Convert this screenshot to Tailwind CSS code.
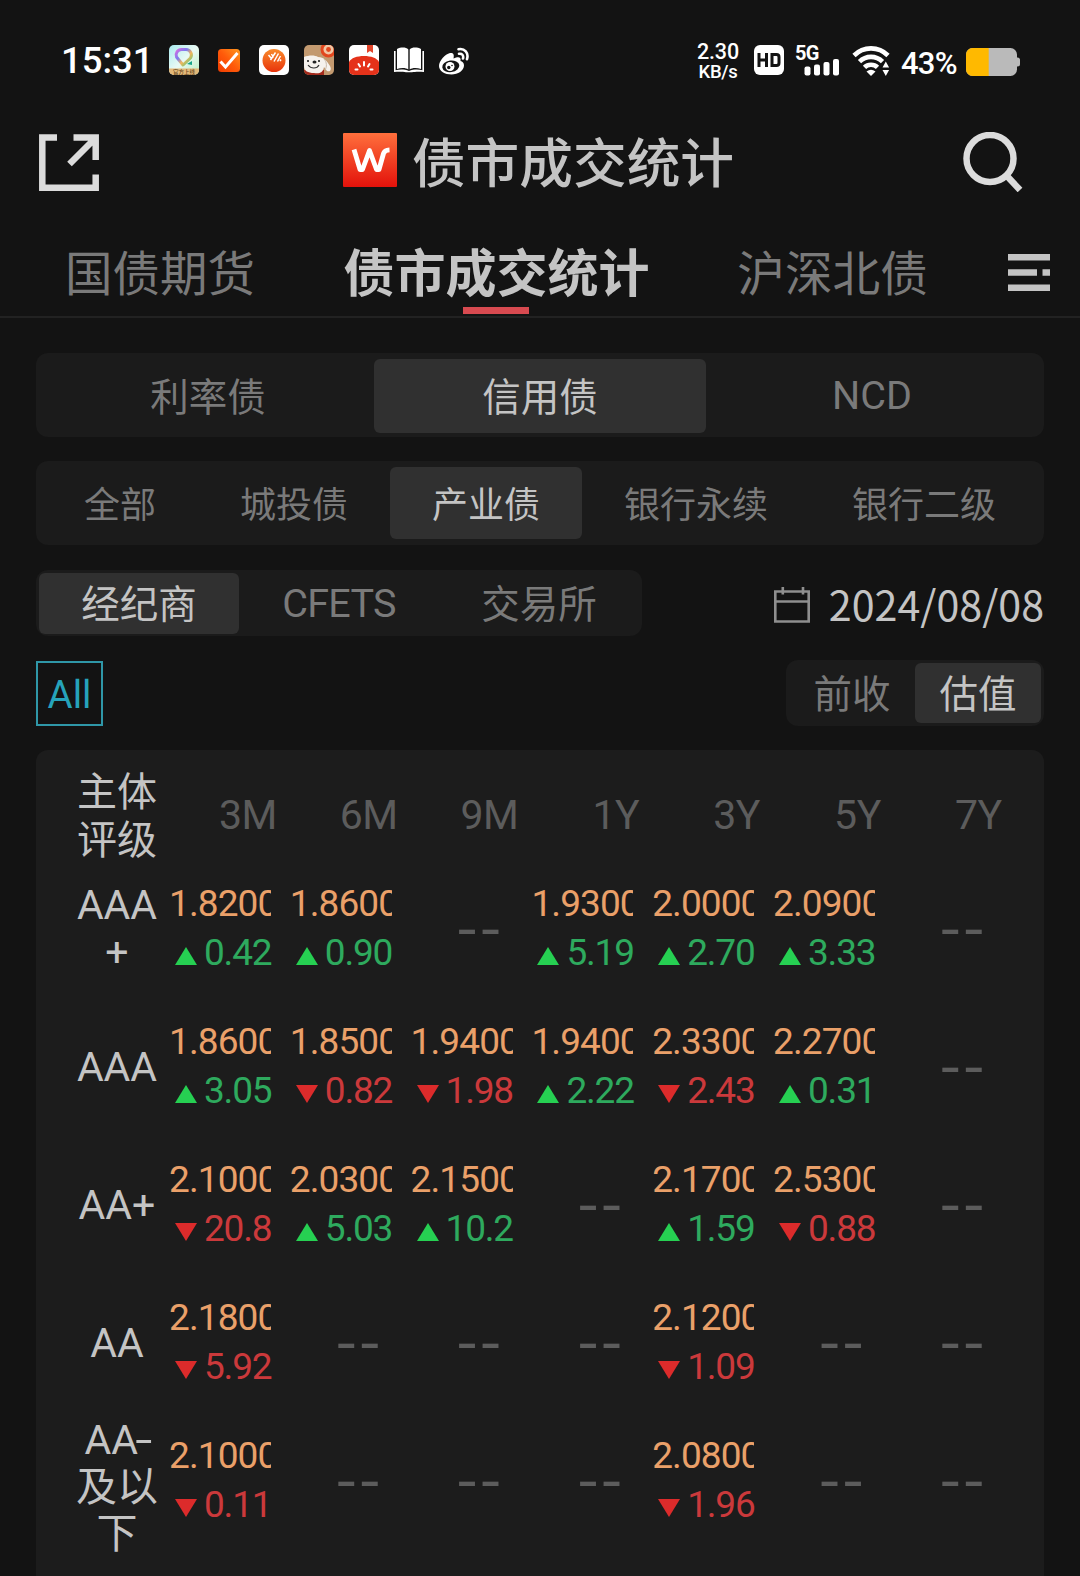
<!DOCTYPE html>
<html lang="zh-CN">
<head>
    <meta charset="UTF-8">
    <meta name="viewport" content="width=device-width, initial-scale=1.0">
    <title>债市成交统计</title>
    <script src="https://cdn.jsdelivr.net/npm/@tailwindcss/browser@4"></script>
</head>
<body class="w-[1080px] h-[1576px] overflow-hidden bg-[#131313] text-[#c4c4c4] font-['Noto_Sans_CJK_SC',sans-serif]">
    <!-- Status bar -->
    <div class="h-[120px] pl-[61px] pr-[60px] flex justify-between text-white font-['Roboto',sans-serif] font-medium">
        <div class="flex items-center h-[120px]">
            <span class="w-[108px] mt-[2px] text-[36.5px] leading-none">15:31</span>
            <div class="flex gap-[15px]">
                <svg class="w-[30px] h-[30px]" viewBox="0 0 30 30">
                    <defs>
                        <linearGradient id="mapBg" x1="0" y1="0" x2="1" y2="1"><stop offset="0" stop-color="#a9eaf0"/><stop offset=".5" stop-color="#e9faf4"/><stop offset="1" stop-color="#b9eec0"/></linearGradient>
                        <linearGradient id="mapPin" x1="0" y1="0" x2="1" y2="1"><stop offset="0" stop-color="#d86be0"/><stop offset=".35" stop-color="#7a7cf0"/><stop offset=".6" stop-color="#f2b75c"/><stop offset="1" stop-color="#42cf7c"/></linearGradient>
                    </defs>
                    <rect width="30" height="30" rx="5" fill="url(#mapBg)"/>
                    <path d="M14 20 7.500 12a5.500 5.500 0 0 1 5-7.500h4.500a5.500 5.500 0 0 1 4.500 8.500z" fill="none" stroke="url(#mapPin)" stroke-width="3" stroke-linejoin="round"/>
                    <path d="M18 19l5-3v4z" fill="#17a589"/>
                    <path d="M0 23.500h30V25a5 5 0 0 1-5 5H5a5 5 0 0 1-5-5z" fill="#e3b878"/>
                    <text x="15" y="29" font-size="5.500" text-anchor="middle" fill="#6b4a22" font-family="Noto Sans CJK SC">官方上线</text>
                </svg>
                <svg class="w-[30px] h-[30px]" viewBox="0 0 30 30">
                    <defs><linearGradient id="todo" x1="1" y1="0" x2="0" y2="1"><stop offset="0" stop-color="#ff9a1f"/><stop offset=".5" stop-color="#ff5a0a"/><stop offset="1" stop-color="#f03c00"/></linearGradient></defs>
                    <rect x="4" y="4" width="22" height="23" rx="3.500" fill="url(#todo)"/>
                    <path d="M6.500 16.500l5 5.500L23.500 8" fill="none" stroke="#fff" stroke-width="3"/>
                </svg>
                <svg class="w-[30px] h-[30px]" viewBox="0 0 30 30">
                    <defs><linearGradient id="disc" x1="0" y1="0" x2="0" y2="1"><stop offset="0" stop-color="#f98a2b"/><stop offset="1" stop-color="#e8340c"/></linearGradient></defs>
                    <rect width="30" height="30" rx="5" fill="#fff"/>
                    <circle cx="15" cy="15.500" r="11.500" fill="url(#disc)"/>
                    <path d="M9.500 10l2.500 3M12.500 9l2 3.500M16.500 7.500l-5 7.500M19.500 8.500l-4.500 8M21.500 11l-3 5.500M22 14.500l-1 1.500" stroke="#fff" stroke-width="1.500" fill="none"/>
                </svg>
                <svg class="w-[30px] h-[30px]" viewBox="0 0 30 30">
                    <defs><clipPath id="jd"><rect width="30" height="30" rx="5"/></clipPath></defs>
                    <g clip-path="url(#jd)">
                        <rect width="30" height="30" fill="#c39a70"/>
                        <path d="M0 30v-5l10-1 10 1v5z" fill="#a32a1c"/>
                        <path d="M0 12c5-2 11-2 14 0 6 0 9 4 12 9 2 4 0 6-3 5l-3-4c-1 6-5 7-10 6-6 0-10-2-10-7z" fill="#f6f2ee"/>
                        <path d="M20 14c3 3 3 8 1 11" fill="none" stroke="#c9b9aa" stroke-width="1"/>
                        <ellipse cx="10.500" cy="17" rx="2" ry="1.500" fill="#222"/>
                        <circle cx="4" cy="16" r="1.100" fill="#222"/><circle cx="15" cy="16" r="1.100" fill="#222"/>
                        <path d="M4 20c3 4 9 4 11 0" fill="none" stroke="#333" stroke-width="1.100"/>
                        <circle cx="24.500" cy="4.500" r="8" fill="#e2471e"/><circle cx="24.500" cy="4.500" r="5" fill="#f1c6a4"/><circle cx="24.500" cy="4.500" r="2.400" fill="#e2471e"/>
                    </g>
                </svg>
                <svg class="w-[30px] h-[30px]" viewBox="0 0 30 30">
                    <defs><clipPath id="tm"><rect width="30" height="30" rx="5"/></clipPath></defs>
                    <g clip-path="url(#tm)">
                        <rect width="30" height="30" fill="#fff"/>
                        <path d="M18 0h6v8l-3-2-3 2z" fill="#e2452a"/>
                        <path d="M0 17c2-4 8-6 15-6s13 2 15 6v13H0z" fill="#e5321a"/>
                        <path d="M15 17v3.500M9.500 19l1.500 2.500M20.500 19L19 21.500M6.500 24.500h2M23.500 24.500h-2" stroke="#fff" stroke-width="2" stroke-linecap="round"/>
                    </g>
                </svg>
                <svg class="w-[30px] h-[30px]" viewBox="0 0 30 30" fill="#fff">
                    <path d="M3 4c4-2 9-2 11.300.500v20C12 22.500 7 22.500 3 24zM27 4c-4-2-9-2-11.300.500v20C18 22.500 23 22.500 27 24z"/>
                    <path d="M0 6h1.600v19.300c4-1 9-1 13.400.7 4.400-1.700 9.400-1.700 13.400-.7V6H30v21c-4-.5-9-.5-12 .3h-6C9 26.500 4 26.500 0 27z"/>
                </svg>
                <svg class="w-[30px] h-[30px]" viewBox="0 0 30 30">
                    <path d="M11 8c-5 1-11 8-11 13 0 5 6 8.500 12.500 8.500S25 25.500 25 20.500c0-2.500-1.500-4-3.500-4.500.8-3.500-1.500-5-7-2.500C15.500 9 14 7.500 11 8z" fill="#fff"/>
                    <ellipse cx="11.800" cy="21.300" rx="8.600" ry="5.800" transform="rotate(-8 11.800 21.300)" fill="#131313"/>
                    <circle cx="11" cy="21.500" r="4.500" fill="#fff"/>
                    <circle cx="9.800" cy="22.500" r="1.700" fill="#131313"/><circle cx="13" cy="20.500" r=".8" fill="#131313"/>
                    <path d="M19.500 4.200c6-1.200 10.500 3.500 8.500 10M20 8.800c3-.5 4.800 1.500 4 4.700" fill="none" stroke="#fff" stroke-width="2.600" stroke-linecap="round"/>
                </svg>
            </div>
        </div>
        <div class="flex items-center h-[120px]">
            <div class="w-[44px] mr-[14px] flex flex-col items-center gap-px leading-none">
                <span class="text-[21.500px] leading-[20px] mt-[2px] tracking-[-0.200px]">2.30</span>
                <span class="text-[18.500px] leading-[18px] tracking-[-0.300px]">KB/s</span>
            </div>
            <svg class="w-[30px] h-[30px] mr-[11px]" viewBox="0 0 30 30">
                <rect width="30" height="30" rx="6" fill="#fff"/>
                <path d="M5 8v14M12.500 8v14M5 15h7.500M18 9.500h4.500q2.500 0 2.500 2.500v6q0 2.500-2.500 2.500H18z" fill="none" stroke="#131313" stroke-width="3"/>
            </svg>
            <div class="relative w-[46px] h-[30px] mr-[11px]">
                <span class="absolute left-0 top-0 text-[20px] font-bold leading-[17px] tracking-[-0.800px]">5G</span>
                <svg class="absolute left-0 top-0 w-[46px] h-[31px]" viewBox="0 0 46 31" fill="#fff">
                    <rect x="9.500" y="21.500" width="6" height="9" rx="2"/><rect x="19" y="19.500" width="6" height="11" rx="2"/><rect x="28.500" y="17" width="6" height="13.500" rx="2"/><rect x="38" y="14" width="6" height="16.500" rx="2"/>
                </svg>
            </div>
            <svg class="w-[38px] h-[32px] mt-[2px] mr-[11px]" viewBox="0 0 38 32">
                <g fill="none" stroke="#fff" stroke-width="4.600">
                    <path d="M2 10.500c9.500-9.500 24.500-9.500 34 0"/>
                    <path d="M7.500 16.700c6.500-6.500 16.500-6.500 23 0"/>
                    <path d="M12.500 22.400c3.500-3.500 9.500-3.500 13 0"/>
                </g>
                <path d="M14.500 26.500q4.500-3.500 9 0L19 31z" fill="#fff"/>
                <path d="M29 23.500l4.800-9 4.800 9v2l-4.800 7-4.800-7z" fill="#131313"/>
                <path d="M30.500 22.500l3.300-6 3.300 6zM30.500 25l3.300 6 3.300-6z" fill="#fff"/>
            </svg>
            <span class="w-[65px] mt-[6px] text-[31px] leading-none tracking-[-0.800px]">43%</span>
            <svg class="w-[54px] h-[28px] mt-[4px]" viewBox="0 0 54 28">
                <rect x="46" y="9.500" width="8" height="9" rx="2.500" fill="#bababa"/>
                <rect width="51" height="28" rx="6.500" fill="#bababa"/>
                <path d="M6.500 0H22.700V28H6.500A6.500 6.500 0 0 1 0 21.500V6.500A6.500 6.500 0 0 1 6.500 0z" fill="#ffb900"/>
            </svg>
        </div>
    </div>

    <!-- Title bar -->
    <div class="h-[84px] pl-[39px] pr-[57px] flex items-center justify-between">
        <svg class="w-[60px] h-[57px]" viewBox="0 0 60 57" fill="none" stroke="#dcdcdc" stroke-width="6.500">
            <path d="M18 3.500H3.300V53.700H56.700V40.500"/>
            <path d="M34.500 3.500H56.700V26M56 4.500L30.500 30"/>
        </svg>
        <div class="flex items-center gap-[15px] ml-[15px] -mt-[4px]">
            <svg class="w-[54px] h-[54px]" viewBox="0 0 54 54">
                <defs><linearGradient id="wind" x1="0" y1="0" x2="0" y2="1"><stop offset="0" stop-color="#ff6f3c"/><stop offset="1" stop-color="#e3120b"/></linearGradient></defs>
                <rect width="54" height="54" rx="1" fill="url(#wind)"/>
                <path d="M11 16.500L17 36.500H19.500L26.500 17.500 33.500 36.500H36L40.500 20.500Q41.500 17 46.500 16.800" fill="none" stroke="#fff" stroke-width="4.800" stroke-linejoin="round"/>
            </svg>
            <h1 class="text-[53.700px] leading-[60px] font-medium">债市成交统计</h1>
        </div>
        <svg class="w-[60px] h-[60px]" viewBox="0 0 60 60" fill="none" stroke="#dcdcdc" stroke-width="6.500">
            <circle cx="27" cy="26.500" r="23.500"/>
            <path d="M43.500 43.500L57 58"/>
        </svg>
    </div>

    <!-- Tabs -->
    <div class="relative h-[114px] pl-[65px] pr-[30px] flex items-center justify-between border-b-2 border-[#222222] text-[47.500px] text-[#7a7a7a]">
        <span class="w-[192px] mt-[21px]">国债期货</span>
        <span class="mt-[20px] mr-[1px] text-[51px] text-[#c4c4c4] font-bold">债市成交统计</span>
        <div class="mt-[21px] flex items-center gap-[80px]">
            <span class="text-[47.700px]">沪深北债</span>
            <svg class="w-[42px] h-[37px] mt-[4px]" viewBox="0 0 42 37" fill="#c4c4c4">
                <path d="M0 0h42v6.500H0zM0 15.300h29v6.500H0zM34.500 15.300H42v6.500h-7.500zM0 30.500h42V37H0z"/>
            </svg>
        </div>
        <div class="absolute left-[463px] bottom-[2px] w-[66px] h-[7px] bg-[#d84a50]"></div>
    </div>

    <div class="px-9 pt-[35px] flex flex-col">
        <!-- Bond type -->
        <div class="h-[84px] p-[6px] grid grid-cols-3 rounded-xl bg-[#1b1b1b] text-[38.500px] text-[#7a7a7a] text-center leading-[70px]">
            <span>利率债</span>
            <span class="rounded-md bg-[#303030] text-[#c4c4c4]">信用债</span>
            <span class="font-['Roboto',sans-serif] text-[39.500px] leading-[74px]">NCD</span>
        </div>

        <!-- Sub type -->
        <div class="mt-[24px] h-[84px] p-[6px] flex rounded-xl bg-[#1b1b1b] text-[36px] text-[#7a7a7a] leading-[70px]">
            <span class="px-[42px]">全部</span>
            <span class="px-[42px]">城投债</span>
            <span class="px-[42px] rounded-md bg-[#303030] text-[#c4c4c4]">产业债</span>
            <span class="px-[42px]">银行永续</span>
            <span class="px-[42px]">银行二级</span>
        </div>

        <!-- Source and date -->
        <div class="mt-[25px] h-[66px] flex items-center justify-between">
            <div class="w-[606px] h-[66px] p-[3px] grid grid-cols-3 rounded-xl bg-[#1b1b1b] text-[38.500px] text-[#7a7a7a] text-center leading-[57px]">
                <span class="rounded-md bg-[#303030] text-[#c4c4c4]">经纪商</span>
                <span class="font-['Roboto',sans-serif] text-[39.500px] leading-[61px] tracking-[-0.700px]">CFETS</span>
                <span>交易所</span>
            </div>
            <div class="flex items-center gap-[19px]">
                <svg class="w-[36px] h-[36px] mt-[3px]" viewBox="0 0 36 36" fill="none" stroke="#8f8f8f">
                    <path d="M1.300 4.500H34.700V34.500H1.300z" stroke-width="2.600"/>
                    <path d="M1 14.500H35M8.800 0v7.500M29 0v7.500" stroke-width="2.600"/>
                </svg>
                <span class="text-[41.200px] leading-[60px]">2024/08/08</span>
            </div>
        </div>

        <!-- Filters -->
        <div class="mt-[24px] h-[66px] flex items-center justify-between text-[38.500px]">
            <div class="w-[67px] h-[65px] border-2 border-[#2f97a8] text-[#26a3ba] text-center leading-[63px] font-['Roboto',sans-serif]">All</div>
            <div class="w-[258px] h-[66px] p-[3px] grid grid-cols-2 rounded-xl bg-[#1b1b1b] text-[#7a7a7a] text-center leading-[57px]">
                <span>前收</span>
                <span class="rounded-md bg-[#303030] text-[#c4c4c4]">估值</span>
            </div>
        </div>

        <!-- Rating table -->
        <div class="mt-[24px] h-[860px] pt-[20px] rounded-t-xl bg-[#1c1c1c]">
            <div class="flex h-[90px] text-[#5c5c5c]">
                <div class="w-[80px] ml-[41px] mr-[11px] text-[40px] leading-[48px] text-[#c4c4c4] -mt-[5px]">主体<br>评级</div>
                <div id="terms" class="flex font-['Roboto',sans-serif] text-[41px] leading-[90px] tracking-[-0.500px]"></div>
            </div>
            <div id="rows"></div>
        </div>
    </div>

    <script>
        const terms = ['3M', '6M', '9M', '1Y', '3Y', '5Y', '7Y'];
        // each cell: [yield, change in bp, 1 = up / 0 = down], null when there was no deal
        const rows = [
            { label: 'AAA<br>+', cells: [['1.8200', '0.42', 1], ['1.8600', '0.90', 1], null, ['1.9300', '5.19', 1], ['2.0000', '2.70', 1], ['2.0900', '3.33', 1], null] },
            { label: 'AAA', cells: [['1.8600', '3.05', 1], ['1.8500', '0.82', 0], ['1.9400', '1.98', 0], ['1.9400', '2.22', 1], ['2.3300', '2.43', 0], ['2.2700', '0.31', 1], null] },
            { label: 'AA+', cells: [['2.1000', '20.8', 0], ['2.0300', '5.03', 1], ['2.1500', '10.2', 1], null, ['2.1700', '1.59', 1], ['2.5300', '0.88', 0], null] },
            { label: 'AA', cells: [['2.1800', '5.92', 0], null, null, null, ['2.1200', '1.09', 0], null, null] },
            { label: 'AA<span class="inline-block leading-none scale-x-150">-</span><br>及以<br>下', tall: true, cells: [['2.1000', '0.11', 0], null, null, null, ['2.0800', '1.96', 0], null, null] }
        ];

        const up = '<svg class="w-[22px] h-[18px] mt-[6px]" viewBox="0 0 22 18"><path d="M11 0l11 18H0z" fill="#26d052"/></svg>';
        const down = '<svg class="w-[22px] h-[18px] mt-[6px]" viewBox="0 0 22 18"><path d="M0 0h22L11 18z" fill="#dc2b2b"/></svg>';

        function renderCell(cell) {
            if (!cell) {
                return '<div class="w-[120.800px] h-[138px] pr-[27px] text-right text-[62px] leading-[124px] tracking-[2px] text-[#5c5c5c]">--</div>';
            }
            const color = cell[2] ? 'text-[#2eaa5e]' : 'text-[#cb393b]';
            return "<div class=\"w-[120.800px] h-[138px] pt-[19px] font-['Roboto',sans-serif]\">" +
                '<div class="w-[103px] pl-px overflow-hidden text-[37px] leading-[49px] tracking-[-0.900px] text-[#eaa069]">' + cell[0] + '</div>' +
                '<div class="flex items-center gap-[7px] pl-[7px] text-[37px] leading-[49px] tracking-[-1.200px] ' + color + '">' + (cell[2] ? up : down) + '<span>' + cell[1] + '</span></div>' +
                '</div>';
        }

        document.getElementById('terms').innerHTML = terms.map(t =>
            '<div class="w-[120.800px] pr-[12px] text-right">' + t + '</div>').join('');

        document.getElementById('rows').innerHTML = rows.map(r =>
            '<div class="flex">' +
            "<div class=\"w-[90px] ml-[36px] mr-[6px] flex items-center justify-center text-center font-['Roboto','Noto_Sans_CJK_SC',sans-serif] text-[41px] leading-[47px] " + (r.tall ? 'h-[150px]' : 'h-[138px]') + '"><span>' + r.label + '</span></div>' +
            r.cells.map(renderCell).join('') +
            '</div>').join('');
    </script>
</body>
</html>
